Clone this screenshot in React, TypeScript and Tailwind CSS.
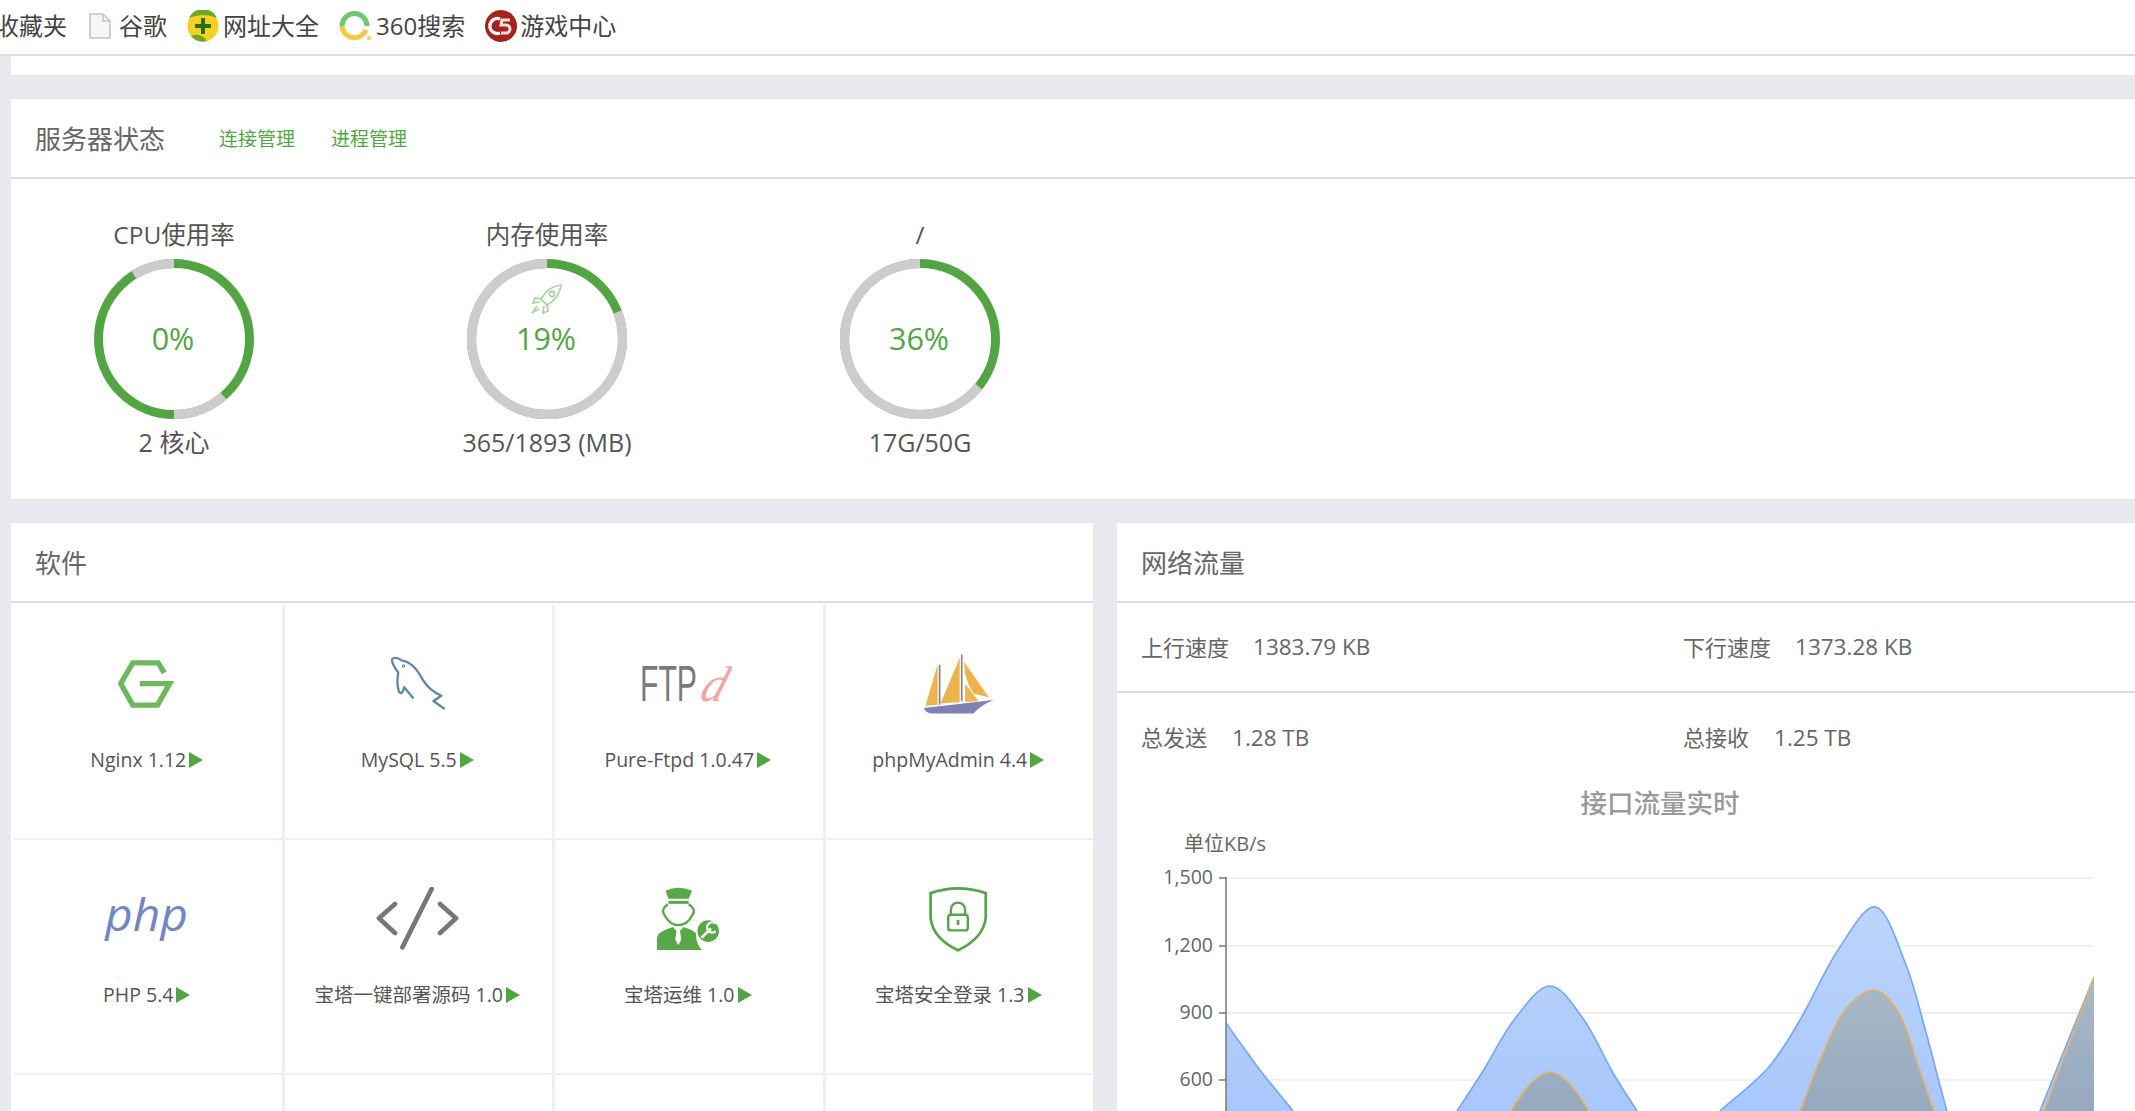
import React from 'react';

const GREEN = '#53a544';
const FONT = "font-['Open_Sans','Noto_Sans_CJK_SC',sans-serif]";

type Pt = [number, number];

// smooth line through points, same look as the echarts smooth area
const smooth = (pts: Pt[]) => {
  let d = `M${pts[0][0]} ${pts[0][1]}`;
  for (let i = 0; i < pts.length - 1; i++) {
    const p0 = pts[i - 1] || pts[i];
    const p1 = pts[i];
    const p2 = pts[i + 1];
    const p3 = pts[i + 2] || p2;
    const c1x = p1[0] + (p2[0] - p0[0]) / 6;
    const c1y = p1[1] + (p2[1] - p0[1]) / 6;
    const c2x = p2[0] - (p3[0] - p1[0]) / 6;
    const c2y = p2[1] - (p3[1] - p1[1]) / 6;
    d += ` C${c1x} ${c1y} ${c2x} ${c2y} ${p2[0]} ${p2[1]}`;
  }
  return d;
};

const BLUE_AREAS: Pt[][] = [
  [[1226, 1023], [1260, 1070], [1293, 1111], [1305, 1130]],
  [[1445, 1130], [1457, 1111], [1483, 1071], [1514, 1020], [1550, 986], [1584, 1020], [1613, 1073], [1637, 1111], [1648, 1130]],
  [[1700, 1130], [1720, 1111], [1768, 1068], [1800, 1020], [1838, 950], [1876, 907], [1906, 965], [1924, 1025], [1947, 1111], [1955, 1130]],
  [[2035, 1130], [2040, 1111], [2094, 977]],
];

const ORANGE_AREAS: Pt[][] = [
  [[1226, 1107], [1232, 1130]],
  [[1500, 1130], [1511, 1111], [1530, 1084], [1550, 1072], [1570, 1084], [1589, 1111], [1600, 1130]],
  [[1790, 1130], [1800, 1111], [1820, 1060], [1845, 1010], [1875, 990], [1900, 1015], [1918, 1065], [1934, 1111], [1942, 1130]],
  [[2038, 1130], [2044, 1111], [2094, 977]],
];

const areaPath = (pts: Pt[]) => {
  const first = pts[0];
  const last = pts[pts.length - 1];
  return `${smooth(pts)} L${last[0]} 1130 L${first[0]} 1130 Z`;
};

const arc = (from: number, to: number) => {
  const r = 75.5;
  const c = 80;
  const pos = (a: number) => {
    const rad = (a * Math.PI) / 180;
    return `${c + r * Math.sin(rad)} ${c - r * Math.cos(rad)}`;
  };
  return `M${pos(from)} A${r} ${r} 0 ${to - from > 180 ? 1 : 0} 1 ${pos(to)}`;
};

const Ring: React.FC<{ grey: [number, number][] }> = ({ grey }) => (
  <svg width="160" height="160" viewBox="0 0 160 160" className="block">
    <circle cx="80" cy="80" r="75.5" fill="none" stroke={GREEN} strokeWidth="9" />
    {grey.map(([a, b]) => (
      <path key={a} d={arc(a, b)} fill="none" stroke="#cccccc" strokeWidth="9.4" />
    ))}
  </svg>
);

const Rocket = () => (
  <svg width="32" height="30" viewBox="0 0 32 30" className="absolute left-[64px] top-[25px]" fill="none" stroke="#a6d29c" strokeWidth="1.6">
    <path d="M30 1 C21 2 14 8 10 15 L16 21 C23 17 29 10 30 1 Z" />
    <circle cx="21" cy="10" r="2.6" />
    <path d="M10 15 L4 14 L2 19 L9 18" />
    <path d="M16 21 L17 27 L12 29 L13 22" />
    <path d="M6 22 L2 28 L8 25" />
  </svg>
);

const Gauge: React.FC<{ title: string; value: string; sub: string; grey: [number, number][]; rocket?: boolean }> = ({ title, value, sub, grey, rocket }) => (
  <div className="w-[200px] flex flex-col items-center gap-[12px]">
    <div className="h-[24px] leading-[24px] text-[24.5px] text-[#555555]">{title}</div>
    <div className="relative w-[160px] h-[160px]">
      <Ring grey={grey} />
      {rocket && <Rocket />}
      <div className="absolute inset-0 flex items-center justify-center text-[30.5px] leading-none -translate-x-[1px] -translate-y-[1px]" style={{ color: GREEN }}>
        {value}
      </div>
    </div>
    <div className="h-[24px] leading-[24px] text-[25px] text-[#555555] -translate-y-[1px]">{sub}</div>
  </div>
);

const NginxIcon = () => (
  <svg width="57" height="48" viewBox="120 90 170 142" fill="none" stroke="#6db85b" strokeWidth="16">
    <path d="M258 128 L240 98 L164 98 L128 160 L164 224 L238 224 L274 160 L185 160" />
  </svg>
);

const MysqlIcon = () => (
  <svg width="57" height="58" viewBox="925 75 172 175" fill="none" stroke="#5f88a5" strokeWidth="7" strokeLinejoin="round" className="-translate-x-[1px]">
    <path d="M936 88 Q948 78 968 92 Q1002 96 1030 150 Q1050 182 1086 198 L1062 214 L1096 238 M936 88 Q938 104 956 128 Q950 160 958 186 Q968 198 974 172 L1002 206" />
    <circle cx="972" cy="108" r="1.5" fill="#5f88a5" />
  </svg>
);

const FtpIcon = () => (
  <svg width="92" height="42" viewBox="0 0 92 42" className="-translate-x-[2px]">
    <text x="0" y="38" fontFamily="'Liberation Sans'" fontSize="50" fill="#7a7a7a" textLength="57" lengthAdjust="spacingAndGlyphs">FTP</text>
    <g transform="translate(58 38) skewX(-18)">
      <text x="0" y="0" fontFamily="'Liberation Serif'" fontStyle="italic" fontSize="50" fill="#f3a79f" textLength="24" lengthAdjust="spacingAndGlyphs">d</text>
    </g>
  </svg>
);

const ShipIcon = () => (
  <svg width="72" height="62" viewBox="975 70 212 182">
    <path d="M980 232 L1186 208 Q1150 222 1126 248 L1000 248 Q984 244 980 232 Z" fill="#7f80b4" />
    <path d="M1021 104 L1021 222 L985 225 Z" fill="#edb44d" />
    <path d="M1086 84 L1086 215 L1030 218 Z" fill="#edb44d" />
    <path d="M1098 95 L1172 200 L1128 190 Q1108 160 1102 130 Z" fill="#edb44d" />
    <path d="M1102 160 L1142 212 L1102 214 Z" fill="#edb44d" />
    <path d="M1027 104 V222 M1092 74 V212" stroke="#85858f" strokeWidth="5" />
  </svg>
);

const PhpIcon = () => (
  <svg width="86" height="44" viewBox="0 0 86 44">
    <text x="1" y="34" fontFamily="'Open Sans'" fontStyle="italic" fontWeight="400" fontSize="46" fill="#7485c4" textLength="83" lengthAdjust="spacingAndGlyphs">php</text>
  </svg>
);

const CodeIcon = () => (
  <svg width="84" height="64" viewBox="885 50 252 190" fill="none" stroke="#777777" strokeWidth="14" strokeLinecap="round" strokeLinejoin="round">
    <path d="M945 100 L897 143 L945 187 M1055 55 L967 230 M1080 100 L1128 143 L1080 187" />
  </svg>
);

const EngineerIcon = () => (
  <svg width="66" height="66" viewBox="172 46 196 196" fill="#59a749">
    <path d="M203 60 Q242 42 282 60 L272 84 L212 84 Z" />
    <rect x="212" y="90" width="60" height="9" />
    <path d="M210 100 Q188 116 200 132 Q216 162 241 162 Q268 162 283 132 Q296 116 272 100" fill="none" stroke="#59a749" strokeWidth="7" />
    <path d="M178 236 L178 198 Q180 182 225 168 L236 180 L232 205 L241 222 L250 205 L246 180 L257 168 Q278 174 294 186 Q292 215 311 236 Z" />
    <circle cx="330" cy="180" r="32" />
    <path d="M310 200 L338 172" stroke="#ffffff" strokeWidth="8" fill="none" />
    <path d="M352 158 A15 15 0 1 0 352 180" stroke="#ffffff" strokeWidth="7" fill="none" />
  </svg>
);

const ShieldIcon = () => (
  <svg width="62" height="66" viewBox="985 45 182 195" fill="none" stroke="#55a548" strokeWidth="8">
    <path d="M995 66 Q1076 38 1158 66 L1158 140 Q1150 200 1076 235 Q1002 200 995 140 Z" />
    <rect x="1047" y="130" width="58" height="46" rx="8" strokeWidth="7" />
    <path d="M1055 130 V115 A21 21 0 0 1 1097 115 V130" strokeWidth="7" />
    <rect x="1072" y="145" width="8" height="15" fill="#55a548" stroke="none" />
  </svg>
);

const SOFTWARE: { name: string; icon: React.ReactNode }[] = [
  { name: 'Nginx 1.12', icon: <NginxIcon /> },
  { name: 'MySQL 5.5', icon: <MysqlIcon /> },
  { name: 'Pure-Ftpd 1.0.47', icon: <FtpIcon /> },
  { name: 'phpMyAdmin 4.4', icon: <ShipIcon /> },
  { name: 'PHP 5.4', icon: <PhpIcon /> },
  { name: '宝塔一键部署源码 1.0', icon: <CodeIcon /> },
  { name: '宝塔运维 1.0', icon: <EngineerIcon /> },
  { name: '宝塔安全登录 1.3', icon: <ShieldIcon /> },
];

const SoftCell: React.FC<{ name?: string; icon?: React.ReactNode }> = ({ name, icon }) => (
  <div className="h-[235px] border-r-[3px] border-b-[2px] border-[#eeeeff] flex flex-col items-center pt-[44px] pr-[2px]">
    {name && (
      <>
        <div className="h-[70px] flex items-center justify-center">{icon}</div>
        <div className="mt-[28px] flex items-center gap-[3px] h-[26px]">
          <span className="text-[19.5px] text-[#555555] whitespace-nowrap">{name}</span>
          <span className="w-0 h-0 border-y-[8.5px] border-y-transparent border-l-[14px] border-l-[#53a544]" />
        </div>
      </>
    )}
  </div>
);

const PageGlyph = () => (
  <svg width="22" height="26" viewBox="0 0 22 26" fill="#f6f6f6" stroke="#c4c4c4" strokeWidth="1.6">
    <path d="M1 1 H14 L21 8 V25 H1 Z" />
    <path d="M14 1 V8 H21" fill="none" />
  </svg>
);

const SiteGlyph = () => (
  <svg width="32" height="32" viewBox="0 0 32 32">
    <circle cx="16" cy="16" r="15.5" fill="#f4d21f" />
    <path d="M2 8 A15.5 15.5 0 0 1 30 8 Q16 2 2 8 Z M4 26 Q14 22 20 31 A15.5 15.5 0 0 1 4 26 Z" fill="#6aa62a" />
    <path d="M16 8 V24 M8 16 H24" stroke="#2f6b17" strokeWidth="4" />
  </svg>
);

const SearchGlyph = () => (
  <svg width="32" height="30" viewBox="0 0 32 30" fill="none" strokeWidth="5">
    <path d="M3 15 A12.5 12.5 0 0 1 28 15" stroke="#71c673" />
    <path d="M3 15 A12.5 12.5 0 0 0 27 19" stroke="#f6c842" />
    <circle cx="30" cy="27" r="2" fill="#f6c842" stroke="none" />
  </svg>
);

const GameGlyph = () => (
  <svg width="32" height="32" viewBox="0 0 32 32" fill="none">
    <circle cx="16" cy="16" r="16" fill="#a5231f" />
    <path d="M15 9 A7.5 7.5 0 1 0 15 23" stroke="#ffffff" strokeWidth="3.2" />
    <path d="M25 10 H17 L16 15 H21 A4 4 0 0 1 21 23 H16" stroke="#f3dcdc" strokeWidth="3" />
  </svg>
);

const BookmarkBar = () => (
  <div className="h-[56px] bg-white border-b-[2px] border-[#dedede] flex items-center text-[24px] text-[#444444] -ml-[5px] pb-[2px] whitespace-nowrap">
    <span>收藏夹</span>
    <span className="ml-[22px] mr-[8px] flex"><PageGlyph /></span>
    <span>谷歌</span>
    <span className="ml-[20px] mr-[4px] flex"><SiteGlyph /></span>
    <span>网址大全</span>
    <span className="ml-[20px] mr-[5px] flex"><SearchGlyph /></span>
    <span>360搜索</span>
    <span className="ml-[20px] mr-[3px] flex"><GameGlyph /></span>
    <span>游戏中心</span>
  </div>
);

const PanelHead: React.FC<{ title: string; children?: React.ReactNode }> = ({ title, children }) => (
  <div className="h-[80px] border-b-[2px] border-[#dddddd] flex items-center pl-[24px] pt-[2px] text-[26px] text-[#666666]">
    <span>{title}</span>
    {children}
  </div>
);

const TrafficRow: React.FC<{ items: [string, string][]; className: string; gap: string }> = ({ items, className, gap }) => (
  <div className={`flex items-center pl-[24px] text-[#666666] ${className}`}>
    {items.map(([label, value]) => (
      <div key={label} className="w-[542px] shrink-0 flex items-center">
        <span className={`text-[22px] ${gap}`}>{label}</span>
        <span className="text-[22.5px]">{value}</span>
      </div>
    ))}
  </div>
);

const TrafficChart = () => {
  const ticks: [number, string][] = [[878, '1,500'], [946, '1,200'], [1013, '900'], [1080, '600']];
  return (
    <svg width="1018" height="341" viewBox="1117 770 1018 341" className="block">
      <defs>
        <clipPath id="plot"><rect x="1226" y="860" width="868" height="260" /></clipPath>
        <linearGradient id="blueFill" x1="0" y1="900" x2="0" y2="1111" gradientUnits="userSpaceOnUse">
          <stop offset="0" stopColor="#bad3fb" />
          <stop offset="1" stopColor="#a3c4fb" />
        </linearGradient>
        <linearGradient id="greyFill" x1="0" y1="980" x2="0" y2="1111" gradientUnits="userSpaceOnUse">
          <stop offset="0" stopColor="#a9b8c6" />
          <stop offset="1" stopColor="#95a9bf" />
        </linearGradient>
      </defs>
      <text x="1660" y="813" textAnchor="middle" fontFamily="'Noto Sans CJK SC'" fontSize="26.5" fontWeight="500" fill="#999999">接口流量实时</text>
      <text x="1184" y="851" fontFamily="'Open Sans','Noto Sans CJK SC'" fontSize="20" fill="#666666">单位KB/s</text>
      {ticks.map(([y, label]) => (
        <g key={label}>
          <path d={`M1226 ${y} H2094`} stroke="#f0f0f0" strokeWidth="2" />
          <path d={`M1219 ${y} H1226`} stroke="#777777" strokeWidth="1.5" />
          <text x="1213" y={y + 6} textAnchor="end" fontFamily="'Open Sans'" fontSize="19.5" fill="#666666">{label}</text>
        </g>
      ))}
      <g clipPath="url(#plot)">
        {BLUE_AREAS.map((pts, i) => (
          <path key={i} d={areaPath(pts)} fill="url(#blueFill)" fillOpacity="0.95" />
        ))}
        {ORANGE_AREAS.map((pts, i) => (
          <path key={i} d={areaPath(pts)} fill="url(#greyFill)" />
        ))}
        {BLUE_AREAS.map((pts, i) => (
          <path key={i} d={smooth(pts)} fill="none" stroke="#72a7f6" strokeWidth="1.6" />
        ))}
        {ORANGE_AREAS.map((pts, i) => (
          <path key={i} d={smooth(pts)} fill="none" stroke="#e6b35a" strokeWidth="1.6" />
        ))}
      </g>
      <path d="M1226 877 V1111" stroke="#777777" strokeWidth="1.5" />
    </svg>
  );
};

export default function App() {
  return (
    <div className={`w-[2135px] h-[1111px] overflow-hidden bg-[#e7e9ee] ${FONT}`}>
      <BookmarkBar />

      <div className="pl-[11px]">
        <div className="h-[19px] bg-white" />

        <div className="mt-[24px] bg-white h-[400px]">
          <PanelHead title="服务器状态">
            <a className="ml-[54px] text-[19px] text-[#53a544]">连接管理</a>
            <a className="ml-[36px] text-[19px] text-[#53a544]">进程管理</a>
          </PanelHead>
          <div className="flex gap-[173px] pl-[63px] pt-[44px]">
            <Gauge title="CPU使用率" value="0%" sub="2 核心" grey={[[139, 180], [328, 360]]} />
            <Gauge title="内存使用率" value="19%" sub="365/1893 (MB)" grey={[[69, 360]]} rocket />
            <Gauge title="/" value="36%" sub="17G/50G" grey={[[129, 360]]} />
          </div>
        </div>

        <div className="mt-[24px] flex gap-[24px] items-start">
          <div className="w-[1082px] bg-white h-[700px] overflow-hidden">
            <PanelHead title="软件" />
            <div className="mt-[2px] pl-[3px] grid grid-cols-[repeat(4,270.5px)]">
              {SOFTWARE.map((s) => (
                <SoftCell key={s.name} name={s.name} icon={s.icon} />
              ))}
              <SoftCell />
              <SoftCell />
              <SoftCell />
              <SoftCell />
            </div>
          </div>

          <div className="w-[1018px] bg-white h-[700px]">
            <PanelHead title="网络流量" />
            <TrafficRow
              className="h-[90px] border-b-[2px] border-[#dddddd]"
              gap="mr-[24px]"
              items={[['上行速度', '1383.79 KB'], ['下行速度', '1373.28 KB']]}
            />
            <TrafficRow
              className="h-[77px] pt-[12px]"
              gap="mr-[25px]"
              items={[['总发送', '1.28 TB'], ['总接收', '1.25 TB']]}
            />
            <TrafficChart />
          </div>
        </div>
      </div>
    </div>
  );
}
